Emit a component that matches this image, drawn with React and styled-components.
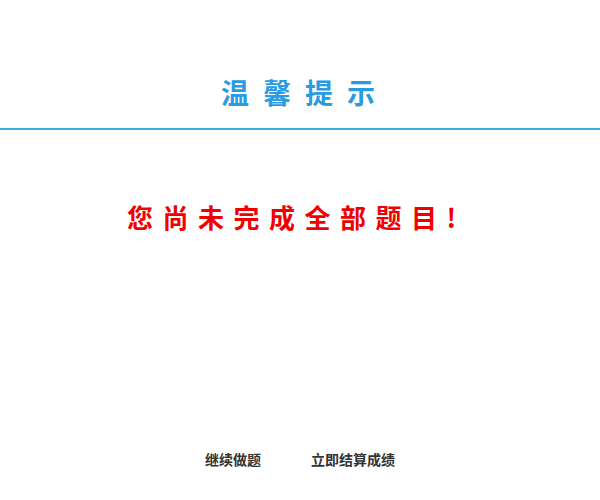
import React from "react";
import styled, { createGlobalStyle } from "styled-components";

const GlobalStyle = createGlobalStyle`
  html, body {
    margin: 0;
    padding: 0;
    background: #fff;
    font-family: "Noto Sans CJK SC", "Noto Sans", sans-serif;
  }
`;

const Page = styled.div`
  display: flex;
  flex-direction: column;
  height: 500px;
  width: 600px;
`;

const Header = styled.div`
  box-sizing: border-box;
  height: 130px;
  display: flex;
  justify-content: center;
  padding-top: 72px;
  border-bottom: 2px solid #3aaed8;
`;

const Title = styled.h2`
  margin: 0;
  padding-left: 10px;
  font-size: 28px;
  line-height: 40px;
  font-weight: 700;
  letter-spacing: 14px;
  color: #2a9be0;
`;

const Message = styled.p`
  margin: 69px 0 0;
  padding-left: 127px;
  font-size: 26px;
  line-height: 36px;
  font-weight: 700;
  letter-spacing: 9.5px;
  color: #f00000;
`;

const Footer = styled.div`
  margin-top: auto;
  padding-bottom: 31px;
  display: flex;
  justify-content: center;
  gap: 50px;
`;

const Action = styled.button`
  border: none;
  background: none;
  padding: 0;
  font-family: inherit;
  font-size: 14px;
  line-height: 20px;
  font-weight: 700;
  color: #333;
  cursor: pointer;
`;

export default function App() {
  return (
    <Page>
      <GlobalStyle />
      <Header>
        <Title>温馨提示</Title>
      </Header>
      <Message>您尚未完成全部题目!</Message>
      <Footer>
        <Action>继续做题</Action>
        <Action>立即结算成绩</Action>
      </Footer>
    </Page>
  );
}
